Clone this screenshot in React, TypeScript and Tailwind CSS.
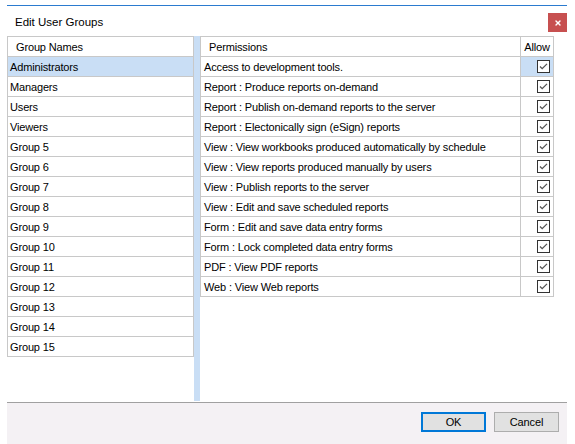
import { X } from 'lucide-react';

const groups = [
  'Administrators',
  'Managers',
  'Users',
  'Viewers',
  'Group 5',
  'Group 6',
  'Group 7',
  'Group 8',
  'Group 9',
  'Group 10',
  'Group 11',
  'Group 12',
  'Group 13',
  'Group 14',
  'Group 15',
];

const permissions = [
  'Access to development tools.',
  'Report : Produce reports on-demand',
  'Report : Publish on-demand reports to the server',
  'Report : Electonically sign (eSign) reports',
  'View : View workbooks produced automatically by schedule',
  'View : View reports produced manually by users',
  'View : Publish reports to the server',
  'View : Edit and save scheduled reports',
  'Form : Edit and save data entry forms',
  'Form : Lock completed data entry forms',
  'PDF : View PDF reports',
  'Web : View Web reports',
];

function CheckBox() {
  return (
    <svg width="13" height="13" viewBox="0 0 13 13" className="block">
      <rect x="0.5" y="0.5" width="12" height="12" fill="#fff" stroke="#333" />
      <path d="M3 6.5 L5.2 8.7 L10 3.9" fill="none" stroke="#555" strokeWidth="1.3" />
    </svg>
  );
}

export default function App() {
  return (
    <div className="w-[575px] h-[444px] bg-white flex flex-col overflow-hidden text-[11px] tracking-[-0.15px] text-black font-['Liberation_Sans',Arial,sans-serif]">
      <div className="mt-[5px] ml-[7px] w-[560px] flex-1 flex flex-col border-t border-[#2b7bcf]">
        {/* Title bar */}
        <div className="h-[30px] flex items-start justify-between">
          <span className="mt-[8px] ml-[8px] text-[11.5px] tracking-normal">Edit User Groups</span>
          <div className="mt-[7px] w-[19px] h-[19px] bg-[#c75050] flex items-center justify-center">
            <X className="w-[8px] h-[8px] text-white" strokeWidth={4} />
          </div>
        </div>

        {/* Lists */}
        <div className="flex-1 flex items-stretch">
          <div className="w-[187px] self-start border-t border-l border-r border-[#c8c8c8]">
            <div className="h-[20px] flex items-center pt-[1px] pl-[8px] border-b border-[#c8c8c8]">Group Names</div>
            {groups.map((g, i) => (
              <div
                key={g}
                className={`h-[20px] flex items-center pt-[1px] pl-[2px] border-b border-[#c8c8c8] ${i === 0 ? 'bg-[#c9def5]' : ''}`}
              >
                {g}
              </div>
            ))}
          </div>
          <div className="w-[6px] mb-[1px] bg-[#c9def5]" />
          <div className="w-[354px] self-start border-t border-l border-r border-[#c8c8c8]">
            <div className="h-[20px] flex border-b border-[#c8c8c8]">
              <div className="flex-1 flex items-center pt-[1px] pl-[8px]">Permissions</div>
              <div className="w-[33px] flex items-center justify-center pt-[1px] border-l border-[#c8c8c8]">Allow</div>
            </div>
            {permissions.map((p, i) => (
              <div key={p} className="h-[20px] flex border-b border-[#c8c8c8]">
                <div className="flex-1 flex items-center pt-[1px] pl-[3px] whitespace-nowrap">{p}</div>
                <div
                  className={`w-[33px] flex items-center pl-[16px] border-l border-[#c8c8c8] ${i === 0 ? 'bg-[#c9def5]' : ''}`}
                >
                  <CheckBox />
                </div>
              </div>
            ))}
          </div>
        </div>

        {/* Footer */}
        <div className="h-[42px] border-t border-[#a0a0a0] bg-[#f4f1f4] flex justify-end items-start gap-[8px] pt-[9px] pr-[8px]">
          <button className="w-[65px] h-[20px] bg-[#e1e1e1] border-2 border-[#0078d7] flex items-center justify-center">
            OK
          </button>
          <button className="w-[65px] h-[20px] bg-[#e1e1e1] border border-[#adadad] flex items-center justify-center">
            Cancel
          </button>
        </div>
      </div>
    </div>
  );
}
